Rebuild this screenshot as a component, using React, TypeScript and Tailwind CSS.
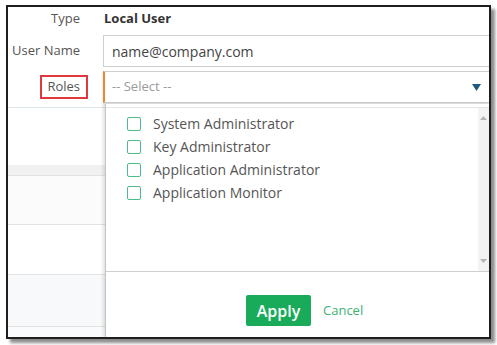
import React from "react";

const roles = [
  "System Administrator",
  "Key Administrator",
  "Application Administrator",
  "Application Monitor",
];

export default function App() {
  return (
    <div
      className="w-[497px] h-[345px] bg-white pl-[6px] pt-[5px]"
      style={{ fontFamily: '"Open Sans", "Noto Sans", sans-serif' }}
    >
      <div className="w-[485px] h-[334px] border-2 border-[#1e1e1e] bg-white shadow-[4px_4px_3px_rgba(0,0,0,0.45)] flex flex-col overflow-hidden">
        {/* Type row */}
        <div className="flex items-center h-[24px]">
          <div className="w-[80px] text-right pr-[8px] text-[13px] text-[#555]">Type</div>
          <div className="pl-[16px] text-[13px] font-bold text-[#333]">Local User</div>
        </div>
        {/* User name row */}
        <div className="flex items-center mt-[4px] h-[32px]">
          <div className="w-[80px] text-right pr-[8px] text-[13px] text-[#555]">User Name</div>
          <div className="ml-[15px] flex-1 h-[32px] border border-[#cfcfcf] border-r-0 flex items-center pl-[8px] text-[14px] text-[#444]">
            name@company.com
          </div>
        </div>
        {/* Roles row */}
        <div className="flex items-center mt-[4px] h-[32px]">
          <div className="w-[80px] flex justify-end">
            <div className="w-[48px] h-[24px] border-2 border-[#e0393e] flex items-center justify-end pr-[6px] text-[13px] text-[#555]">
              Roles
            </div>
          </div>
          <div className="ml-[15px] flex-1 h-[32px] border border-[#cfcfcf] border-l-2 border-l-[#f0862a] border-r-0 flex items-center pl-[7px] pr-[8px] text-[13px] text-[#9a9a9a] shadow-[0_2px_2px_rgba(0,0,0,0.12)]">
            <span className="flex-1">-- Select --</span>
            <svg width="9" height="7" viewBox="0 0 9 7">
              <path d="M0 0 H9 L4.5 7 Z" fill="#1d5b7e" />
            </svg>
          </div>
        </div>
        {/* bottom section */}
        <div className="flex flex-1 mt-[1px]">
          <div className="w-[97px] flex flex-col">
            <div className="h-[3px]" />
            <div className="h-[1px] bg-[#dbe5ea]" />
            <div className="h-[57px]" />
            <div className="h-[10px] bg-[#f1f1f1]" />
            <div className="h-[1px] bg-[#e2e2e2]" />
            <div className="h-[48px] bg-[#fbfbfb]" />
            <div className="h-[1px] bg-[#e2e2e2]" />
            <div className="h-[49px]" />
            <div className="h-[1px] bg-[#e2e2e2]" />
            <div className="h-[51px] bg-[#f7f9fb]" />
            <div className="h-[1px] bg-[#e2e2e2]" />
            <div className="flex-1 bg-[#f9fbfc]" />
          </div>
          <div className="flex-1 flex flex-col border-l border-[#c4c4c4] shadow-[-2px_0_3px_rgba(0,0,0,0.12)] bg-white">
            <div className="h-[4px] border-b border-[#e6e6e6]" />
            <div className="h-[164px] flex border-b border-[#cfcfcf]">
              <div className="flex-1 pl-[21px] pt-[4px] flex flex-col">
                {roles.map((r) => (
                  <div key={r} className="h-[23px] flex items-center gap-[12px]">
                    <div className="w-[14px] h-[14px] border-[1.5px] border-[#4dbb8a] rounded-[2px]" />
                    <span className="text-[14px] text-[#555]">{r}</span>
                  </div>
                ))}
              </div>
              <div className="w-[11px] bg-[#f3f3f3] flex flex-col items-center justify-between py-[8px]">
                <svg width="7" height="4" viewBox="0 0 7 4">
                  <path d="M0 4 L3.5 0 L7 4 Z" fill="#b5b5b5" />
                </svg>
                <svg width="7" height="4" viewBox="0 0 7 4">
                  <path d="M0 0 L7 0 L3.5 4 Z" fill="#b5b5b5" />
                </svg>
              </div>
            </div>
            <div className="flex items-center pl-[140px] pt-[23px] gap-[12px]">
              <button className="w-[65px] h-[31px] bg-[#19ab5a] rounded-[2px] text-white text-[16px] font-semibold">
                Apply
              </button>
              <span className="text-[13px] text-[#3cb371]">Cancel</span>
            </div>
          </div>
        </div>
      </div>
    </div>
  );
}
